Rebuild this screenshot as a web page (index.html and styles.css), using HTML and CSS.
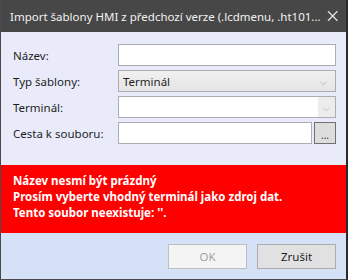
FILE: index.html
```html
<!DOCTYPE html>
<html lang="cs">
<head>
  <meta charset="UTF-8" />
  <title>Import šablony HMI</title>
  <link rel="stylesheet" href="styles.css">
</head>
<body>
  <div class="window">
    <div class="titlebar">
      <span class="title">Import šablony HMI z předchozí verze (.lcdmenu, .ht101...</span>
      <svg class="close" width="12" height="12" viewBox="0 0 12 12">
        <path d="M1 1 L11 11 M11 1 L1 11" stroke="#e8e8e8" stroke-width="1.2" fill="none"/>
      </svg>
    </div>

    <div class="form">
      <div class="row">
        <label>Název:</label>
        <div class="input"></div>
      </div>
      <div class="row">
        <label>Typ šablony:</label>
        <div class="select">
          <span>Terminál</span>
          <span class="arrow">&#x2335;</span>
        </div>
      </div>
      <div class="row">
        <label>Terminál:</label>
        <div class="input combo">
          <span class="combo-btn"><span class="arrow">&#x2335;</span></span>
        </div>
      </div>
      <div class="row">
        <label>Cesta k souboru:</label>
        <div class="path">
          <div class="input"></div>
          <div class="browse">...</div>
        </div>
      </div>
    </div>

    <div class="errors">
      <div>Název nesmí být prázdný</div>
      <div>Prosím vyberte vhodný terminál jako zdroj dat.</div>
      <div>Tento soubor neexistuje: ''.</div>
    </div>

    <div class="footer">
      <button class="btn disabled">OK</button>
      <button class="btn">Zrušit</button>
    </div>
  </div>
</body>
</html>
```

FILE: styles.css
```css
body {
  margin: 0;
  background: #2b2b2b;
  font-family: "Noto Sans", "Open Sans", sans-serif;
  font-size: 11.5px;
}

.window {
  width: 347px;
  height: 280px;
  box-sizing: border-box;
  border: 1px solid #4a4a4a;
  border-top: none;
  border-right-color: #2a2a2a;
  display: flex;
  flex-direction: column;
  background: #e9ebfa;
}

.titlebar {
  height: 32px;
  background: #474747;
  color: #f2f2f2;
  display: flex;
  align-items: center;
  padding: 0 8px 0 9px;
  flex-shrink: 0;
}

.title {
  flex: 1;
  white-space: nowrap;
  margin-right: 6px;
}

.form {
  padding: 12px 10px 0 12px;
  display: flex;
  flex-direction: column;
  gap: 4px;
}

.row {
  display: flex;
  align-items: center;
  height: 22px;
}

.row label {
  width: 105px;
  color: #1e1e1e;
}

.input {
  box-sizing: border-box;
  width: 218px;
  height: 22px;
  background: #fff;
  border: 1px solid #abadb3;
}

.select {
  box-sizing: border-box;
  width: 218px;
  height: 22px;
  border: 1px solid #acacac;
  background: linear-gradient(#f0f0f0, #e5e5e5);
  display: flex;
  align-items: center;
  justify-content: space-between;
  padding: 0 8px 0 4px;
  color: #1e1e1e;
}

.arrow {
  font-size: 9px;
  color: #a0a0a0;
}

.combo {
  display: flex;
  justify-content: flex-end;
}

.combo-btn {
  width: 17px;
  background: #ececec;
  display: flex;
  align-items: center;
  justify-content: center;
}

.path {
  display: flex;
  gap: 2px;
}

.path .input {
  width: 194px;
}

.browse {
  box-sizing: border-box;
  width: 22px;
  height: 22px;
  background: #dddddd;
  border: 1px solid #707070;
  display: flex;
  align-items: flex-end;
  justify-content: center;
  font-size: 10px;
  line-height: 15px;
  color: #333;
}

.errors {
  margin-top: 21px;
  height: 68px;
  box-sizing: border-box;
  background: #ff0000;
  color: #fff;
  font-weight: bold;
  padding: 8px 12px 0;
  line-height: 16px;
}

.footer {
  flex: 1;
  background: #d5e1f7;
  display: flex;
  justify-content: flex-end;
  align-items: flex-start;
  gap: 10px;
  padding: 11px 10px 0 0;
}

.btn {
  box-sizing: border-box;
  width: 79px;
  height: 25px;
  font: inherit;
  color: #1e1e1e;
  background: #e1e1e1;
  border: 1px solid #adadad;
  padding: 0;
}

.btn.disabled {
  background: #f4f4f4;
  border-color: #bfbfbf;
  color: #a3a3a3;
}
```
